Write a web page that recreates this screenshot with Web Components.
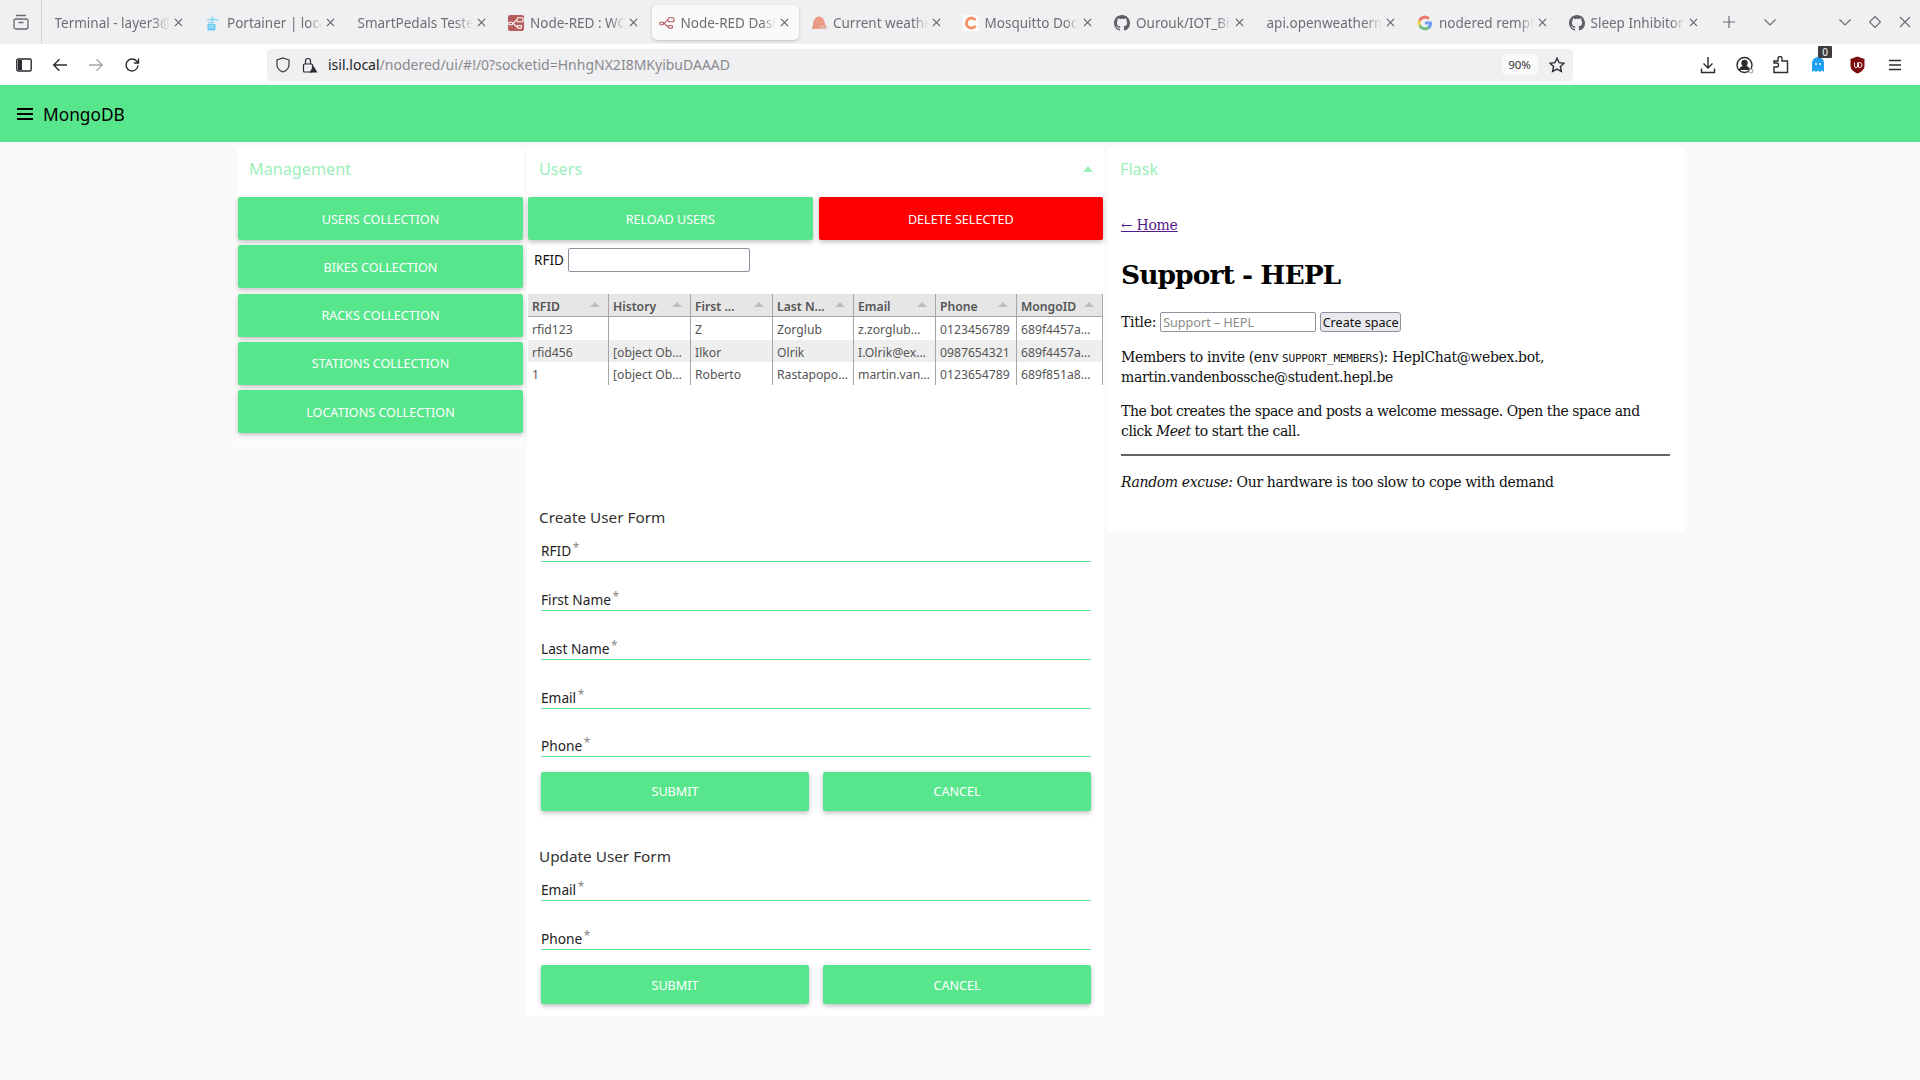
<!DOCTYPE html>
<html>
<head>
<meta charset="utf-8">
<title>Node-RED Dashboard</title>
<style>
  html, body { margin: 0; height: 1080px; overflow: hidden; background: #fafafa; font-family: "Noto Sans", sans-serif; }
</style>
</head>
<body>
<browser-tabs></browser-tabs>
<browser-toolbar></browser-toolbar>
<app-bar>MongoDB</app-bar>
<dash-page>
  <dash-panel title="Management" style="width:287px">
    <div style="display:flex;flex-direction:column;gap:5.3px;padding:0 1px 8px 1px">
      <dash-button>USERS COLLECTION</dash-button>
      <dash-button>BIKES COLLECTION</dash-button>
      <dash-button>RACKS COLLECTION</dash-button>
      <dash-button>STATIONS COLLECTION</dash-button>
      <dash-button>LOCATIONS COLLECTION</dash-button>
    </div>
  </dash-panel>
  <dash-panel title="Users" collapsible style="width:577px">
    <div style="display:flex;gap:6px;padding:0 1px">
      <dash-button style="flex:1">RELOAD USERS</dash-button>
      <dash-button style="flex:1" color="#ff0000">DELETE SELECTED</dash-button>
    </div>
    <rfid-search></rfid-search>
    <user-table></user-table>
    <user-form heading="Create User Form" fields="RFID,First Name,Last Name,Email,Phone" short-last style="margin-top:121px"></user-form>
    <user-form heading="Update User Form" fields="Email,Phone" style="margin-top:34px;padding-bottom:12px"></user-form>
  </dash-panel>
  <dash-panel title="Flask" style="width:576px;margin-left:1px">
    <support-page></support-page>
  </dash-panel>
</dash-page>

<script>
const GITHUB = 'M8 0C3.58 0 0 3.58 0 8c0 3.54 2.29 6.53 5.47 7.59.4.07.55-.17.55-.38 0-.19-.01-.82-.01-1.49-2.01.37-2.53-.49-2.69-.94-.09-.23-.48-.94-.82-1.13-.28-.15-.68-.52-.01-.53.63-.01 1.08.58 1.23.82.72 1.21 1.87.87 2.33.66.07-.52.28-.87.51-1.07-1.78-.2-3.64-.89-3.64-3.95 0-.87.31-1.59.82-2.15-.08-.2-.36-1.02.08-2.12 0 0 .67-.21 2.2.82.64-.18 1.32-.27 2-.27.68 0 1.36.09 2 .27 1.53-1.04 2.2-.82 2.2-.82.44 1.1.16 1.92.08 2.12.51.56.82 1.27.82 2.15 0 3.07-1.87 3.75-3.65 3.95.29.25.54.73.54 1.48 0 1.07-.01 1.93-.01 2.2 0 .21.15.46.55.38A8.013 8.013 0 0016 8c0-4.42-3.58-8-8-8z'

const NODES = (color) => `<path d="M4.500 8.500C7 8.500 6.500 5 9 5M4.500 8.500C7 8.500 7 11.800 9.500 11.800" fill="none" stroke="${color}" stroke-width="1.100"/><rect x=".8" y="7.300" width="3.700" height="2.400" rx=".8" fill="none" stroke="${color}" stroke-width="1.100"/><rect x="9" y="2.800" width="6" height="4" rx="1.300" fill="none" stroke="${color}" stroke-width="1.100"/><rect x="9.500" y="10.500" width="4" height="2.600" rx=".8" fill="none" stroke="${color}" stroke-width="1.100"/>`

const FAVICONS = {
  portainer: `<path d="M6.800 .5h1.200v2.700l6 1.500v.8H8V7h1v1.500H3V7h3.800V5.500H1.500v-.8l5.300-1.500z" fill="#8ed9f5"/><path d="M2.500 9h8v6.500h-8z" fill="#6ccbf2"/><path d="M4 10.500h5M4 12.500h5" stroke="#b6e7f9" stroke-width=".8"/>`,
  wires: `<rect width="16" height="16" rx="2" fill="#b85d5d"/>${NODES('#fff')}`,
  wiresRed: NODES('#b5595d'),
  weather: `<path d="M1 13c0-1 .3-2 1-2.500C1.800 5 4.500 1.500 8 1.500s5.500 3 6 7.500l1.500 2.500c.3 1.500-.5 2.500-2 2.500-1 0-1.500-.8-2-.8s-1 .8-2 .8-1.500-.8-2-.8-1 .8-2 .8H2.500C1.700 14 1 13.800 1 13z" fill="#eb9a85"/><path d="M9 10.500h6.500l.3 2c-.3 1-1 1.500-2.300 1.500H9z" fill="#e3b5a6"/>`,
  mosquitto: `<rect width="16" height="16" fill="#fbfbfb"/><path d="M12.500 5.200A5 5 0 1 0 12.500 10.800" fill="none" stroke="#f58f66" stroke-width="2.800"/>`,
  github: `<path d="${GITHUB}" fill="#5f5f64"/>`,
  google: `<path d="M15 8.200c0-.6-.1-1.100-.2-1.600H8v3h3.900c-.2.900-.7 1.700-1.500 2.200l2.400 1.900c1.400-1.300 2.200-3.200 2.200-5.500z" fill="#6f9ff5"/><path d="M8 15.200c2 0 3.600-.7 4.800-1.800l-2.400-1.900c-.6.400-1.400.7-2.400.7-1.900 0-3.500-1.300-4.100-3L1.400 11c1.200 2.500 3.700 4.200 6.600 4.200z" fill="#72bf85"/><path d="M3.900 9.200a4.300 4.300 0 0 1 0-2.700L1.400 4.600a7.200 7.200 0 0 0 0 6.500z" fill="#f6ca4c"/><path d="M8 3.700c1.100 0 2 .4 2.800 1.100l2.100-2.100A7.200 7.200 0 0 0 1.400 4.600l2.500 1.900c.6-1.700 2.200-2.800 4.100-2.800z" fill="#ed7a6e"/>`
}

class BrowserTabs extends HTMLElement {
  constructor() {
    super()
    const tabs = [
      ['', 'Terminal - layer3@isil: ~'],
      ['portainer', 'Portainer | local'],
      ['', 'SmartPedals Tester'],
      ['wires', 'Node-RED : WC Bikes'],
      ['wiresRed', 'Node-RED Dashboard', true],
      ['weather', 'Current weather data'],
      ['mosquitto', 'Mosquitto Docker'],
      ['github', 'Ourouk/IOT_Bikes'],
      ['', 'api.openweathermap.org'],
      ['google', 'nodered remplir'],
      ['github', 'Sleep Inhibitor'],
    ]
    const items = tabs.map(([icon, text, active]) => `
      <div class="tab ${active ? 'active' : ''}">
        ${icon ? `<svg class="fav" viewBox="0 0 16 16">${FAVICONS[icon]}</svg>` : ''}
        <span class="name">${text}</span>
        <svg class="close" viewBox="0 0 10 10"><path d="M1 1l8 8M9 1l-8 8"/></svg>
      </div>`).join('')
    this.attachShadow({ mode: 'open' }).innerHTML = `
      <style>
        :host { display: flex; height: 44px; background: #eff0f2; font: 13.500px "Noto Sans", sans-serif; color: #6e6e73; box-sizing: border-box; }
        .view { width: 42px; display: flex; align-items: center; justify-content: center; border-right: 1px solid #cfcfd4; height: 44px; box-sizing: border-box; margin-right: 1.500px; }
        .tab { width: 151.500px; height: 35px; margin-top: 5px; display: flex; align-items: center; padding: 0 12px 0 11px; box-sizing: border-box; }
        .tab.active { background: #fafafa; border-radius: 5px; box-shadow: 0 1px 3px rgba(0,0,0,.2); width: 147.500px; margin-left: 2px; margin-right: 2px; padding: 0 10px 0 8px; }
        .fav { width: 16px; height: 16px; flex: none; margin-right: 6px; margin-left: -1px; }
        .name { flex: 1; white-space: nowrap; overflow: hidden; -webkit-mask-image: linear-gradient(to right, #000 85%, transparent 100%); mask-image: linear-gradient(to right, #000 85%, transparent 100%); }
        .close { width: 9px; height: 9px; flex: none; margin-left: 4px; fill: none; stroke: #5e5e63; stroke-width: 1.200; }
        .extra { display: flex; align-items: center; height: 44px; }
        .extra svg { fill: none; stroke: #6e6e73; stroke-width: 1.200; }
        .right { margin-left: auto; display: flex; align-items: center; height: 44px; }
        .right svg { fill: none; stroke: #6e6e73; stroke-width: 1.200; width: 12px; height: 12px; }
      </style>
      <div class="view">
        <svg width="16" height="16" viewBox="0 0 16 16" fill="none" stroke="#68686d" stroke-width="1.300"><rect x="1" y="5" width="14" height="10" rx="2"/><path d="M3 1.500h10M5.500 8.500h5"/></svg>
      </div>
      ${items}
      <div class="extra">
        <svg style="margin-left:12px" width="14" height="14" viewBox="0 0 14 14"><path d="M7 1v12M1 7h12"/></svg>
        <svg style="margin-left:28px" width="12" height="12" viewBox="0 0 12 12"><path d="M.5 3.500L6 9l5.500-5.500"/></svg>
      </div>
      <div class="right">
        <svg style="margin-right:18px" viewBox="0 0 12 12"><path d="M.5 3.500L6 9l5.500-5.500"/></svg>
        <svg style="margin-right:18px" viewBox="0 0 12 12"><path d="M6 .5L11.500 6 6 11.500.5 6z"/></svg>
        <svg style="margin-right:9px" viewBox="0 0 12 12"><path d="M1 1l10 10M11 1L1 11"/></svg>
      </div>`
  }
}

class BrowserToolbar extends HTMLElement {
  constructor() {
    super()
    this.attachShadow({ mode: 'open' }).innerHTML = `
      <style>
        :host { display: flex; align-items: center; height: 41px; background: #fff; font: 14px "Noto Sans", sans-serif; box-sizing: border-box; }
        .btn { width: 36px; height: 32px; display: flex; align-items: center; justify-content: center; flex: none; position: relative; }
        svg { fill: none; stroke: #2b2b30; stroke-width: 1.400; }
        .url { margin-left: 117px; width: 1306px; height: 32px; background: #f0f0f2; border-radius: 4px; display: flex; align-items: center; box-sizing: border-box; padding-left: 9px; }
        .addr { margin-left: 10px; color: #8a8a8e; white-space: nowrap; }
        .addr b { font-weight: 400; color: #222; }
        .zoom { margin-left: auto; background: #fafafa; border-radius: 4px; width: 36px; height: 21px; font-size: 11.500px; color: #333; display: flex; align-items: center; justify-content: center; }
        .star { margin: 0 8.500px 0 11px; }
        .badge { position: absolute; top: -3px; left: 19px; background: #3d3d40; color: #fff; font-size: 10px; line-height: 12px; width: 14px; text-align: center; border-radius: 1px; }
        .end { display: flex; margin-left: 117px; }
        .left { display: flex; margin-left: 6px; }
      </style>
      <div class="left">
        <div class="btn"><svg width="16" height="14" viewBox="0 0 16 14"><rect x=".8" y="1" width="14.400" height="12" rx="1.500"/><path d="M2 2h4v10H2z" fill="#2b2b30" stroke="none"/></svg></div>
        <div class="btn"><svg width="16" height="14" viewBox="0 0 16 14"><path d="M15 7H2M7.500 1.200L1.700 7l5.800 5.800"/></svg></div>
        <div class="btn"><svg width="16" height="14" viewBox="0 0 16 14" style="stroke:#a8a8ac"><path d="M1 7h13M8.500 1.200L14.300 7l-5.800 5.800"/></svg></div>
        <div class="btn"><svg width="16" height="16" viewBox="0 0 16 16"><path d="M14 8.500A6 6 0 1 1 12.300 3.800L14.500 6M14.500 1.500V6H10"/></svg></div>
      </div>
      <div class="url">
        <svg width="14" height="16" viewBox="0 0 14 16" style="stroke:#3a3a3e;stroke-width:1.200"><path d="M7 1l6 2v5c0 3.500-3 5.800-6 7-3-1.200-6-3.500-6-7V3z"/></svg>
        <svg width="16" height="16" viewBox="0 0 16 16" style="margin-left:12px;stroke:#2b2b30;stroke-width:1.200"><rect x="1.500" y="7" width="9" height="8" rx="1"/><path d="M3.500 7V4a2.500 2.500 0 0 1 5 0v3"/><path d="M11.500 9l4 6.500h-8z" fill="#2b2b30" stroke="none"/></svg>
        <span class="addr"><b>isil.local</b>/nodered/ui/#!/0?socketid=HnhgNX2I8MKyibuDAAAD</span>
        <span class="zoom">90%</span>
        <svg class="star" width="16" height="16" viewBox="0 0 16 16"><path d="M8 1.200l2.100 4.500 4.900.6-3.600 3.300 1 4.900L8 12.100l-4.400 2.400 1-4.900L1 6.300l4.900-.6z"/></svg>
      </div>
      <div class="end">
        <div class="btn"><svg width="16" height="18" viewBox="0 0 16 18"><path d="M8 1v11M3.500 7.500L8 12l4.500-4.500M1.500 12.500v4h13v-4"/></svg></div>
        <div class="btn" style="width:37px"><svg width="18" height="18" viewBox="0 0 18 18"><circle cx="8.500" cy="9" r="7.500"/><circle cx="8.500" cy="7" r="2.500" fill="#2b2b30"/><path d="M3.500 14c1-3 3-3.500 5-3.500s4 .5 5 3.500" fill="#2b2b30"/><circle cx="15" cy="15" r="2" fill="#fff" stroke="#999" stroke-width="1"/></svg></div>
        <div class="btn"><svg width="16" height="18" viewBox="0 0 16 18"><path d="M1 16.500V11h2.500a2 2 0 0 0 0-4H1V5h4V2.500a2 2 0 0 1 4 0V5h5.500v11.500z"/></svg></div>
        <div class="btn" style="width:38px"><svg width="14" height="18" viewBox="0 0 14 18" style="stroke:none"><path d="M1 16V7a6 6 0 0 1 12 0v9l-2-1.500L9 16l-2-1.500L5 16l-2-1.500z" fill="#1ea0f0"/><circle cx="5" cy="8" r="1" fill="#fff"/><circle cx="9" cy="8" r="1" fill="#fff"/></svg><span class="badge">0</span></div>
        <div class="btn" style="width:40px"><svg width="15" height="18" viewBox="0 0 15 18" style="stroke:none"><path d="M7.500 .5l7 2.500v7c0 3.500-3.500 6-7 7.500-3.500-1.500-7-4-7-7.500V3z" fill="#7d0d0d"/><path d="M4.500 6.500v3.500a1.500 1.500 0 0 0 3 0V6.500M8.500 6.500h1a2 2 0 0 1 0 5h-1z" fill="none" stroke="#eee" stroke-width="1"/></svg></div>
        <div class="btn"><svg width="14" height="12" viewBox="0 0 14 12"><path d="M1 1.500h12M1 6h12M1 10.500h12"/></svg></div>
      </div>`
  }
}

class AppBar extends HTMLElement {
  constructor() {
    super()
    this.attachShadow({ mode: 'open' }).innerHTML = `
      <style>
        :host { display: flex; align-items: center; height: 57px; background: #58e68c; color: #000; font: 17.300px "Noto Sans", sans-serif; padding-left: 17px; }
        svg { margin-right: 10px; }
        span { padding-top: 1px; }
      </style>
      <svg width="16" height="12" viewBox="0 0 16 12" fill="#000"><rect width="16" height="2"/><rect y="5" width="16" height="2"/><rect y="10" width="16" height="2"/></svg>
      <span><slot></slot></span>`
  }
}

class DashPage extends HTMLElement {
  constructor() {
    super()
    this.attachShadow({ mode: 'open' }).innerHTML = `
      <style>
        :host { display: flex; justify-content: center; align-items: flex-start; gap: 3px; padding-top: 6px; margin-left: 1px; }
      </style>
      <slot></slot>`
  }
}

class DashPanel extends HTMLElement {
  constructor() {
    super()
    const arrow = this.hasAttribute('collapsible') ? '<span class="arrow"></span>' : ''
    this.attachShadow({ mode: 'open' }).innerHTML = `
      <style>
        :host { display: block; background: #fff; flex: none; box-sizing: border-box; }
        .head { height: 49px; display: flex; align-items: center; padding: 0 12px; box-sizing: border-box; color: #9cefbb; font-size: 16.200px; padding-bottom: 8px; }
        .arrow { margin-left: auto; margin-right: -1px; width: 0; height: 0; border: 5px solid transparent; border-top: 0; border-bottom: 6px solid #9cefbb; }
      </style>
      <div class="head"><span>${this.getAttribute('title')}</span>${arrow}</div>
      <slot></slot>`
    this.removeAttribute('title')
  }
}

class DashButton extends HTMLElement {
  constructor() {
    super()
    const color = this.getAttribute('color') || '#58e68c'
    this.attachShadow({ mode: 'open' }).innerHTML = `
      <style>
        :host { display: flex; align-items: center; justify-content: center; height: 43px; padding-top: 1px; background: ${color}; color: #fff; font: 12.600px "Noto Sans", sans-serif; border-radius: 2px; box-shadow: 0 2px 5px rgba(0,0,0,.26); box-sizing: border-box; }
      </style>
      <slot></slot>`
  }
}

class RfidSearch extends HTMLElement {
  constructor() {
    super()
    this.attachShadow({ mode: 'open' }).innerHTML = `
      <style>
        :host { display: flex; align-items: center; margin: 8px 0 0 7px; font: 13.500px "Noto Sans", sans-serif; color: #111; height: 24px; }
        input { margin: 0 0 0 4px; width: 182px; height: 24px; box-sizing: border-box; border: 1px solid #8f8f9d; border-radius: 2px; background: #fff; padding: 0; }
      </style>
      RFID<input type="text" aria-label="RFID">`
  }
}

class UserTable extends HTMLElement {
  constructor() {
    super()
    const head = ['RFID', 'History', 'First ...', 'Last N...', 'Email', 'Phone', 'MongoID']
    const rows = [
      ['rfid123', '', 'Z', 'Zorglub', 'z.zorglub…', '0123456789', '689f4457a…'],
      ['rfid456', '[object Ob…', 'Ilkor', 'Olrik', 'I.Olrik@ex…', '0987654321', '689f4457a…'],
      ['1', '[object Ob…', 'Roberto', 'Rastapopo…', 'martin.van…', '0123654789', '689f851a8…'],
    ]
    const cells = (row, cls) => row.map((text) => `<div class="cell">${text}${cls ? '<i></i>' : ''}</div>`).join('')
    this.attachShadow({ mode: 'open' }).innerHTML = `
      <style>
        :host { display: block; margin: 22px 1px 0 1px; font: 12.200px "Noto Sans", sans-serif; color: #555; }
        .row { display: grid; grid-template-columns: 81px 82px 82px 81px 82px 81px 86px; height: 22.700px; padding-top: 1px; box-sizing: border-box; }
        .row.head { height: 23px; background: #e6e6e6; font-weight: 600; color: #555; border-bottom: 1px solid #a6a6a6; }
        .row.alt { background: #eeeeee; }
        .cell { position: relative; display: flex; align-items: center; padding-left: 4px; border-right: 1px solid #a6a6a6; white-space: nowrap; overflow: hidden; box-sizing: border-box; margin-top: -1px; }
        .cell > i { position: absolute; right: 8px; top: 8px; width: 0; height: 0; border: 5px solid transparent; border-top: 0; border-bottom: 5px solid #bdbdbd; }
        .cell { padding-top: 2px; }
      </style>
      <div class="row head">${cells(head, true)}</div>
      ${rows.map((row, index) => `<div class="row ${index === 1 ? 'alt' : ''}">${cells(row)}</div>`).join('')}`
  }
}

class FormField extends HTMLElement {
  constructor() {
    super()
    this.attachShadow({ mode: 'open' }).innerHTML = `
      <style>
        :host { display: flex; align-items: flex-end; box-sizing: border-box; border-bottom: 1px solid #58e68c; height: 49px; color: #222; font: 13.700px/20px "Noto Sans", sans-serif; }
        sup { color: #888; font-size: 12px; line-height: 12px; margin: 1px 0 0 1.500px; align-self: flex-start; }
        .text { display: flex; height: 20px; }
      </style>
      <div class="text"><span>${this.getAttribute('label')}</span><sup>*</sup></div>`
  }
}

class UserForm extends HTMLElement {
  constructor() {
    super()
    const fields = this.getAttribute('fields').split(',')
    this.attachShadow({ mode: 'open' }).innerHTML = `
      <style>
        :host { display: block; font-family: "Noto Sans", sans-serif; }
        h3 { margin: 0 0 0 12px; font-size: 15.300px; font-weight: 400; line-height: 22px; color: #333; }
        .fields { padding: 0 13px 0 14px; }
        form-field:first-child { height: 34px; }
        :host([short-last]) form-field:nth-last-child(2) { height: 48px; }
        :host([short-last]) dash-button { padding-top: 0; }
        .actions { display: flex; gap: 14px; margin-top: 15px; }
        dash-button { flex: 1; height: 39px; }
      </style>
      <h3>${this.getAttribute('heading')}</h3>
      <div class="fields">
        ${fields.map((label) => `<form-field label="${label}"></form-field>`).join('')}
        <div class="actions"><dash-button>SUBMIT</dash-button><dash-button>CANCEL</dash-button></div>
      </div>`
  }
}

class SupportPage extends HTMLElement {
  constructor() {
    super()
    this.attachShadow({ mode: 'open' }).innerHTML = `
      <style>
        :host { display: block; padding: 18px 14px 39px 13px; font: 14px/20px "DejaVu Serif", serif; color: #111; letter-spacing: -.3px; }
        a { color: #551a8b; }
        h1 { margin: 20px 0 0; font-size: 26.500px; line-height: 40px; font-weight: 700; color: #000; letter-spacing: -.95px; }
        .title { display: flex; align-items: center; margin-top: 17px; height: 20px; }
        input { margin: 0 0 0 4px; width: 156px; height: 20px; box-sizing: border-box; border: 1px solid #8f8f9d; border-radius: 2px; padding: 0 2px; font: 12.600px "Noto Sans", sans-serif; letter-spacing: 0; }
        input::placeholder { color: #8a8a8a; opacity: 1; }
        button { margin: 0 0 0 4px; width: 81px; height: 20px; padding: 0; box-sizing: border-box; border: 1px solid #8f8f9d; border-radius: 3px; background: #e9e9ed; color: #111; font: 12.600px "Noto Sans", sans-serif; letter-spacing: 0; }
        p { margin: 14px 0 0; }
        code { font: 11px "DejaVu Sans Mono", monospace; letter-spacing: -.2px; }
        hr { margin: 13px 0 0; height: 2px; border: 0; background: #666; }
      </style>
      <a href="#">← Home</a>
      <h1>Support - HEPL</h1>
      <div class="title">Title:<input placeholder="Support – HEPL" aria-label="Title"><button>Create space</button></div>
      <p style="margin-top:15px;letter-spacing:-.36px">Members to invite (env <code>SUPPORT_MEMBERS</code>): HeplChat@webex.bot, martin.vandenbossche@student.hepl.be</p>
      <p style="letter-spacing:-.45px">The bot creates the space and posts a welcome message. Open the space and click <em>Meet</em> to start the call.</p>
      <hr>
      <p style="margin-top:16px;letter-spacing:-.36px"><em>Random excuse:</em> Our hardware is too slow to cope with demand</p>`
  }
}

customElements.define('browser-tabs', BrowserTabs)
customElements.define('browser-toolbar', BrowserToolbar)
customElements.define('app-bar', AppBar)
customElements.define('dash-page', DashPage)
customElements.define('dash-panel', DashPanel)
customElements.define('dash-button', DashButton)
customElements.define('rfid-search', RfidSearch)
customElements.define('user-table', UserTable)
customElements.define('form-field', FormField)
customElements.define('user-form', UserForm)
customElements.define('support-page', SupportPage)
</script>
</body>
</html>
